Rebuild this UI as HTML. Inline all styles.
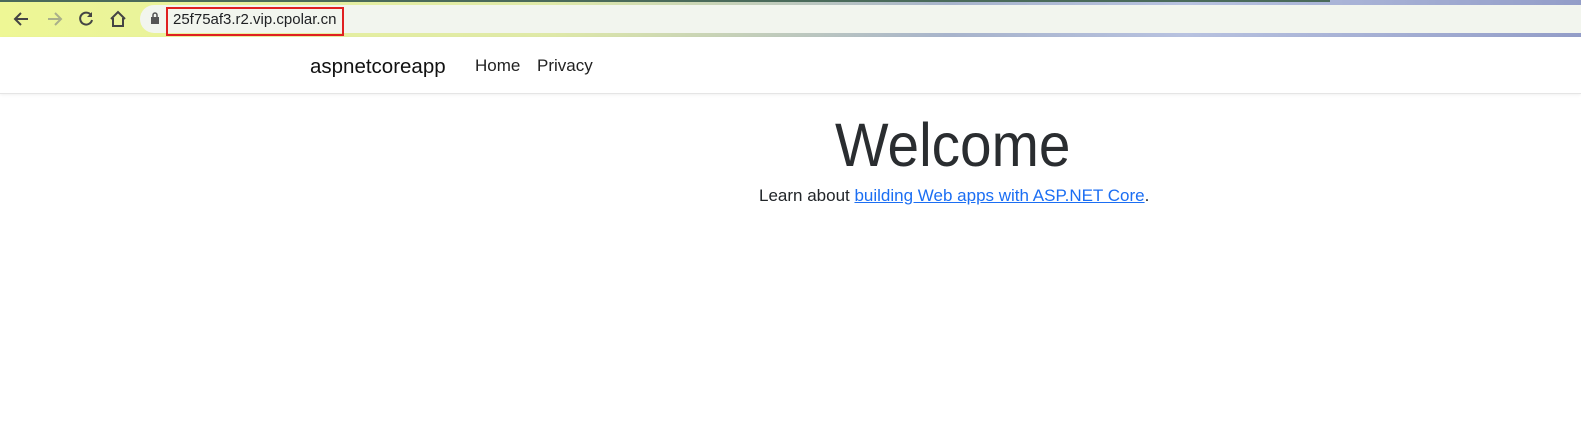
<!DOCTYPE html>
<html><head><meta charset="utf-8"><style>
body{margin:0;width:1581px;height:444px;overflow:hidden;background:#fff;font-family:"Liberation Sans",sans-serif;position:relative}
.tb{position:absolute;left:0;top:0;width:1581px;height:37px;background:linear-gradient(90deg,#eef795 0%,#dfe9a8 35%,#a8b4cc 60%,#b8c2e0 75%,#939dc8 100%)}
.tb:before{content:"";position:absolute;left:0;top:0;width:1330px;height:2px;background:#4a6a5a}
.addr{position:absolute;left:140px;top:5px;width:1460px;height:28px;border-radius:14px;background:#f2f5ee}
.url{position:absolute;left:166px;top:7px;width:178px;height:29px;border:2px solid #e02020;box-sizing:border-box;font-size:15px;line-height:22px;padding-left:5px;color:#202124}
.ic{position:absolute;top:9px}
.nav{position:absolute;left:0;top:37px;width:1581px;height:56px;border-bottom:1px solid #e5e5e5;box-shadow:0 1px 3px rgba(0,0,0,.06)}
.brand{position:absolute;left:310px;top:55px;font-size:20.5px;color:#111}
.lnk{position:absolute;top:56px;font-size:17px;color:#222}
h1{position:absolute;left:835px;top:110px;margin:0;font-weight:normal;font-size:61px;color:#2a2d30;transform:scaleX(0.93);transform-origin:0 0;white-space:nowrap}
p{position:absolute;left:759px;top:186px;margin:0;font-size:17px;color:#212529;white-space:nowrap}
a{color:#1b6ef3;text-decoration:underline}
</style></head><body>
<div class="tb"></div>
<div class="addr"></div>
<svg class="ic" style="left:12px" width="20" height="20" viewBox="0 0 20 20"><path d="M16 10H4M9 4L3 10l6 6" stroke="#444" stroke-width="2" fill="none"/></svg>
<svg class="ic" style="left:44px" width="20" height="20" viewBox="0 0 20 20"><path d="M4 10h12M11 4l6 6-6 6" stroke="#a9b08a" stroke-width="2" fill="none"/></svg>
<svg class="ic" style="left:76px" width="20" height="20" viewBox="0 0 20 20"><path d="M15 6A6 6 0 1 0 16 11" stroke="#444" stroke-width="2" fill="none"/><path d="M16 3v5h-5z" fill="#444"/></svg>
<svg class="ic" style="left:108px" width="20" height="20" viewBox="0 0 20 20"><path d="M3 10L10 3l7 7M5 9v8h10V9" stroke="#444" stroke-width="2" fill="none"/></svg>
<svg class="ic" style="left:150px;top:12px" width="10" height="12" viewBox="0 0 10 12"><rect x="1" y="5" width="8" height="7" fill="#555"/><path d="M3 5V3a2 2 0 0 1 4 0v2" stroke="#555" stroke-width="1.5" fill="none"/></svg>
<div class="url">25f75af3.r2.vip.cpolar.cn</div>
<div class="nav"></div>
<div class="brand">aspnetcoreapp</div>
<div class="lnk" style="left:475px">Home</div>
<div class="lnk" style="left:537px">Privacy</div>
<h1>Welcome</h1>
<p>Learn about <a>building Web apps with ASP.NET Core</a>.</p>
</body></html>
